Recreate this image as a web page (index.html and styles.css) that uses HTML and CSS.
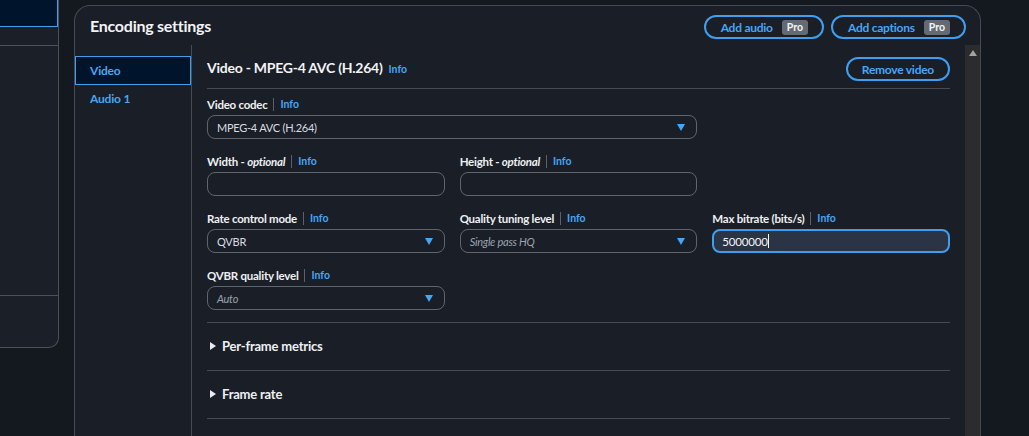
FILE: index.html
```html
<!DOCTYPE html>
<html lang="en">
<head>
<meta charset="utf-8">
<title>Encoding settings</title>
<link rel="stylesheet" href="styles.css">
</head>
<body>
<div class="page">
  <aside class="side">
    <div class="side-item"></div>
    <div class="side-row"></div>
    <div class="side-block"></div>
    <div class="side-foot"></div>
  </aside>

  <section class="card">
    <header class="card-head">
      <h2 class="card-title">Encoding settings</h2>
      <div class="actions">
        <button class="pill">Add audio <span class="badge">Pro</span></button>
        <button class="pill">Add captions <span class="badge">Pro</span></button>
      </div>
    </header>

    <div class="card-body">
      <nav class="tabs">
        <a class="tab tab-active">Video</a>
        <a class="tab">Audio 1</a>
      </nav>

      <div class="content">
        <div class="section-head">
          <h3 class="section-title">Video - MPEG-4 AVC (H.264) <a class="info">Info</a></h3>
          <button class="pill pill-plain">Remove video</button>
        </div>

        <div class="form-grid">
          <div class="field span2">
            <div class="label">Video codec<span class="sep"></span><a class="info">Info</a></div>
            <div class="select"><span class="value">MPEG-4 AVC (H.264)</span><span class="caret"></span></div>
          </div>

          <div class="field col1">
            <div class="label">Width - <em>optional</em><span class="sep"></span><a class="info">Info</a></div>
            <div class="input"></div>
          </div>
          <div class="field">
            <div class="label">Height - <em>optional</em><span class="sep"></span><a class="info">Info</a></div>
            <div class="input"></div>
          </div>

          <div class="field col1">
            <div class="label">Rate control mode<span class="sep"></span><a class="info">Info</a></div>
            <div class="select"><span class="value">QVBR</span><span class="caret"></span></div>
          </div>
          <div class="field">
            <div class="label">Quality tuning level<span class="sep"></span><a class="info">Info</a></div>
            <div class="select"><span class="value placeholder">Single pass HQ</span><span class="caret"></span></div>
          </div>
          <div class="field">
            <div class="label">Max bitrate (bits/s)<span class="sep"></span><a class="info">Info</a></div>
            <div class="input input-focus"><span class="value">5000000</span><span class="cursor"></span></div>
          </div>

          <div class="field col1">
            <div class="label">QVBR quality level<span class="sep"></span><a class="info">Info</a></div>
            <div class="select"><span class="value placeholder">Auto</span><span class="caret"></span></div>
          </div>
        </div>

        <div class="expander"><span class="tri"></span>Per-frame metrics</div>
        <div class="expander"><span class="tri"></span>Frame rate</div>
      </div>

      <div class="scrollbar"><span class="scroll-up"></span></div>
    </div>
  </section>
</div>
</body>
</html>
```

FILE: styles.css
```css
* { box-sizing: border-box; }

html, body {
  margin: 0;
  height: 100%;
}

body {
  background: #14181f;
  font-family: Lato, "Open Sans", "Liberation Sans", sans-serif;
  color: #e9ebed;
  overflow: hidden;
}

.page {
  display: flex;
  align-items: flex-start;
}

/* left side panel */
.side {
  width: 59px;
  flex: none;
  background: #1b1f28;
  border-right: 1px solid #4b505a;
  border-bottom: 1px solid #4b505a;
  border-bottom-right-radius: 10px;
  display: flex;
  flex-direction: column;
}
.side-item {
  height: 27px;
  background: #00142b;
  border-right: 1px solid #3d9ff0;
  border-bottom: 1px solid #3d9ff0;
}
.side-row {
  height: 19px;
  border-bottom: 1px solid #4b505a;
}
.side-block {
  height: 250px;
  border-bottom: 1px solid #4b505a;
}
.side-foot {
  height: 51px;
}

/* main card */
.card {
  margin-left: 15px;
  margin-top: 5px;
  width: 907px;
  height: 480px;
  flex: none;
  background: #1a1e27;
  border: 1px solid #454a53;
  border-bottom: none;
  border-radius: 16px 16px 0 0;
  display: flex;
  flex-direction: column;
}

.card-head {
  height: 39px;
  padding: 0 14px 0 15px;
  display: flex;
  align-items: center;
  justify-content: space-between;
}
.card-title {
  margin: 0;
  font-size: 16px;
  font-weight: 700;
  letter-spacing: -0.25px;
  color: #f2f3f5;
}
.actions {
  display: flex;
  gap: 7px;
  margin-top: 3px;
}

.pill {
  height: 24px;
  padding: 0 14px 0 15px;
  border: 2px solid #3f9eef;
  border-radius: 14px;
  background: transparent;
  color: #45a6f5;
  font-family: inherit;
  font-size: 12px;
  font-weight: 700;
  letter-spacing: -0.25px;
  display: inline-flex;
  align-items: center;
  gap: 9px;
  white-space: nowrap;
}
.badge {
  display: inline-block;
  height: 15px;
  line-height: 15px;
  padding: 0 5px;
  border-radius: 3px;
  background: #646a73;
  color: #f4f4f4;
  font-size: 10.5px;
  font-weight: 700;
  letter-spacing: 0;
}

.card-body {
  flex: 1;
  display: flex;
  min-height: 0;
}

.tabs {
  width: 117px;
  flex: none;
  border-right: 1px solid #454a53;
  padding-top: 11px;
  display: flex;
  flex-direction: column;
}
.tab {
  display: flex;
  align-items: center;
  height: 27px;
  padding-left: 15px;
  color: #45a6f5;
  font-size: 12px;
  font-weight: 700;
  letter-spacing: -0.2px;
}
.tab-active {
  height: 29px;
  background: #00142b;
  border: 1px solid #3d9ff0;
  padding-left: 14px;
}

.content {
  flex: 1;
  padding: 0 15px;
  min-width: 0;
}

.section-head {
  margin-top: 12px;
  padding-bottom: 7px;
  border-bottom: 1px solid #454a53;
  display: flex;
  align-items: center;
  justify-content: space-between;
}
.section-title {
  margin: 0 0 3px;
  font-size: 14px;
  font-weight: 700;
  letter-spacing: -0.25px;
  color: #f2f3f5;
  display: flex;
  align-items: baseline;
  gap: 6px;
}
.pill-plain {
  padding: 0 14px;
}

.info {
  color: #45a6f5;
  font-size: 10.5px;
  font-weight: 700;
  letter-spacing: 0;
}

.form-grid {
  margin-top: 7px;
  padding-bottom: 12px;
  border-bottom: 1px solid #454a53;
  display: grid;
  grid-template-columns: repeat(3, 1fr);
  column-gap: 15px;
  row-gap: 14px;
}
.span2 { grid-column: 1 / span 2; }
.col1 { grid-column: 1; }

.label {
  height: 16px;
  margin-bottom: 3px;
  display: flex;
  align-items: center;
  font-size: 11.5px;
  font-weight: 700;
  letter-spacing: -0.25px;
  color: #eef0f2;
  white-space: pre;
}
.label em {
  font-style: italic;
}
.sep {
  width: 1px;
  height: 13px;
  background: #5b616b;
  margin: 0 6px 0 6px;
}

.select, .input {
  height: 24px;
  border: 1px solid #5f656e;
  border-radius: 8px;
  padding: 0 11px 0 9px;
  display: flex;
  align-items: center;
  justify-content: space-between;
  font-size: 11px;
  letter-spacing: -0.25px;
  color: #d9dde2;
}
.value.placeholder {
  font-style: italic;
  color: #9aa3ae;
}
.caret {
  width: 0;
  height: 0;
  border-left: 4.5px solid transparent;
  border-right: 4.5px solid transparent;
  border-top: 7px solid #45a6f5;
  margin-top: 1px;
}

.input-focus {
  border: 2px solid #3f9eef;
  background: #2a3444;
  padding-left: 8px;
  justify-content: flex-start;
  color: #f4f5f7;
  font-size: 11.5px;
  letter-spacing: -0.2px;
}
.cursor {
  width: 1px;
  height: 14px;
  background: #f4f5f7;
}

.expander {
  height: 48px;
  border-bottom: 1px solid #454a53;
  display: flex;
  align-items: center;
  padding-left: 3px;
  padding-bottom: 1px;
  font-size: 13px;
  font-weight: 700;
  letter-spacing: -0.2px;
  color: #eef0f2;
}
.tri {
  width: 0;
  height: 0;
  border-top: 4px solid transparent;
  border-bottom: 4px solid transparent;
  border-left: 6px solid #e9ebed;
  margin-right: 6px;
}

.scrollbar {
  width: 15px;
  flex: none;
  background: #2c2c2e;
  display: flex;
  justify-content: center;
  padding-top: 5px;
}
.scroll-up {
  width: 0;
  height: 0;
  border-left: 4.5px solid transparent;
  border-right: 4.5px solid transparent;
  border-bottom: 6px solid #a3a3a3;
}
```
